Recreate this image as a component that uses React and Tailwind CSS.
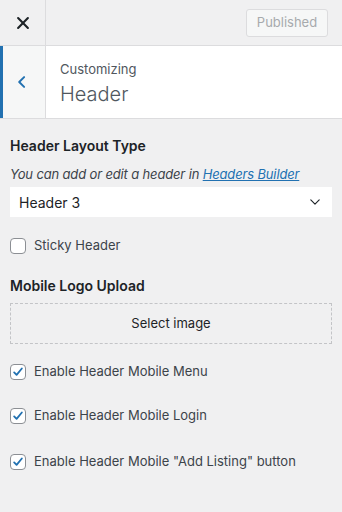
import React from "react";

function Check({ checked, label }) {
  return (
    <label className="flex h-[20px] items-center gap-2 text-[13px] text-[#3c434a]">
      <span className="flex h-4 w-4 shrink-0 items-center justify-center rounded-[4px] border border-[#8c8f94] bg-white">
        {checked && (
          <svg viewBox="0 0 20 20" className="h-[14px] w-[14px]" fill="none">
            <path d="M4.5 10.5l3.5 3.5 7.5-9" stroke="#2271b1" strokeWidth="2.6" strokeLinecap="round" strokeLinejoin="round" />
          </svg>
        )}
      </span>
      <span>{label}</span>
    </label>
  );
}

export default function App() {
  return (
    <div className="h-[512px] w-[342px] overflow-hidden bg-[#f0f0f1] font-['Inter','Liberation_Sans',sans-serif] text-[#1d2327]">
      <div className="flex h-[46px] border-b border-[#dcdcde]">
        <div className="flex w-[46px] items-center justify-center border-r border-[#dcdcde]">
          <svg viewBox="0 0 20 20" className="h-[14px] w-[14px]">
            <path d="M3 3l14 14M17 3L3 17" stroke="#1d2327" strokeWidth="3" strokeLinecap="round" />
          </svg>
        </div>
        <div className="flex flex-1 items-center justify-end pr-[14px]">
          <div className="flex h-[28px] w-[82px] items-center justify-center rounded-[3px] border border-[#dcdcde] bg-[#f6f7f7] text-[13px] text-[#a7aaad]">
            Published
          </div>
        </div>
      </div>
      <div className="flex h-[73px] border-b border-[#dcdcde] bg-white">
        <div className="flex w-[46px] items-center justify-center border-l-[3px] border-r border-l-[#2271b1] border-r-[#dcdcde] bg-[#f6f7f7] pr-[4px]">
          <svg viewBox="0 0 20 20" className="h-[14px] w-[14px]" fill="none">
            <path d="M13 3l-7 7 7 7" stroke="#2271b1" strokeWidth="2.8" strokeLinecap="round" strokeLinejoin="round" />
          </svg>
        </div>
        <div className="flex flex-col justify-center pl-[14px] pt-[1px]">
          <div className="text-[13px] leading-[18px] text-[#50575e]">Customizing</div>
          <div className="mt-[4px] text-[20px] font-light leading-[24px] text-[#50575e]">Header</div>
        </div>
      </div>
      <div className="px-[10px] pt-[17px]">
        <div className="text-[14px] font-semibold leading-[20px] text-[#1d2327]">Header Layout Type</div>
        <div className="mt-[9px] text-[13px] italic leading-[18px] tracking-[-0.15px] text-[#3c434a]">
          You can add or edit a header in <span className="text-[#2271b1] underline">Headers Builder</span>
        </div>
        <div className="mt-[4px] flex h-[30px] items-center justify-between bg-white pl-[9px] pr-[10px] text-[14px] text-[#1d2327]">
          <span>Header 3</span>
          <svg viewBox="0 0 20 20" className="h-[14px] w-[14px]" fill="none">
            <path d="M4 7l6 6 6-6" stroke="#1d2327" strokeWidth="1.6" strokeLinecap="round" strokeLinejoin="round" />
          </svg>
        </div>
        <div className="mt-[19px]">
          <Check label="Sticky Header" />
        </div>
        <div className="mt-[20px] text-[14px] font-semibold leading-[20px] text-[#1d2327]">Mobile Logo Upload</div>
        <div className="mt-[7px] flex h-[41px] items-center justify-center border border-dashed border-[#c3c4c7] text-[13px] text-[#1d2327]">
          Select image
        </div>
        <div className="mt-[18px] flex flex-col">
          <Check checked label="Enable Header Mobile Menu" />
          <div className="mt-[24px]">
            <Check checked label="Enable Header Mobile Login" />
          </div>
          <div className="mt-[26px]">
            <Check checked label={'Enable Header Mobile "Add Listing" button'} />
          </div>
        </div>
      </div>
    </div>
  );
}
